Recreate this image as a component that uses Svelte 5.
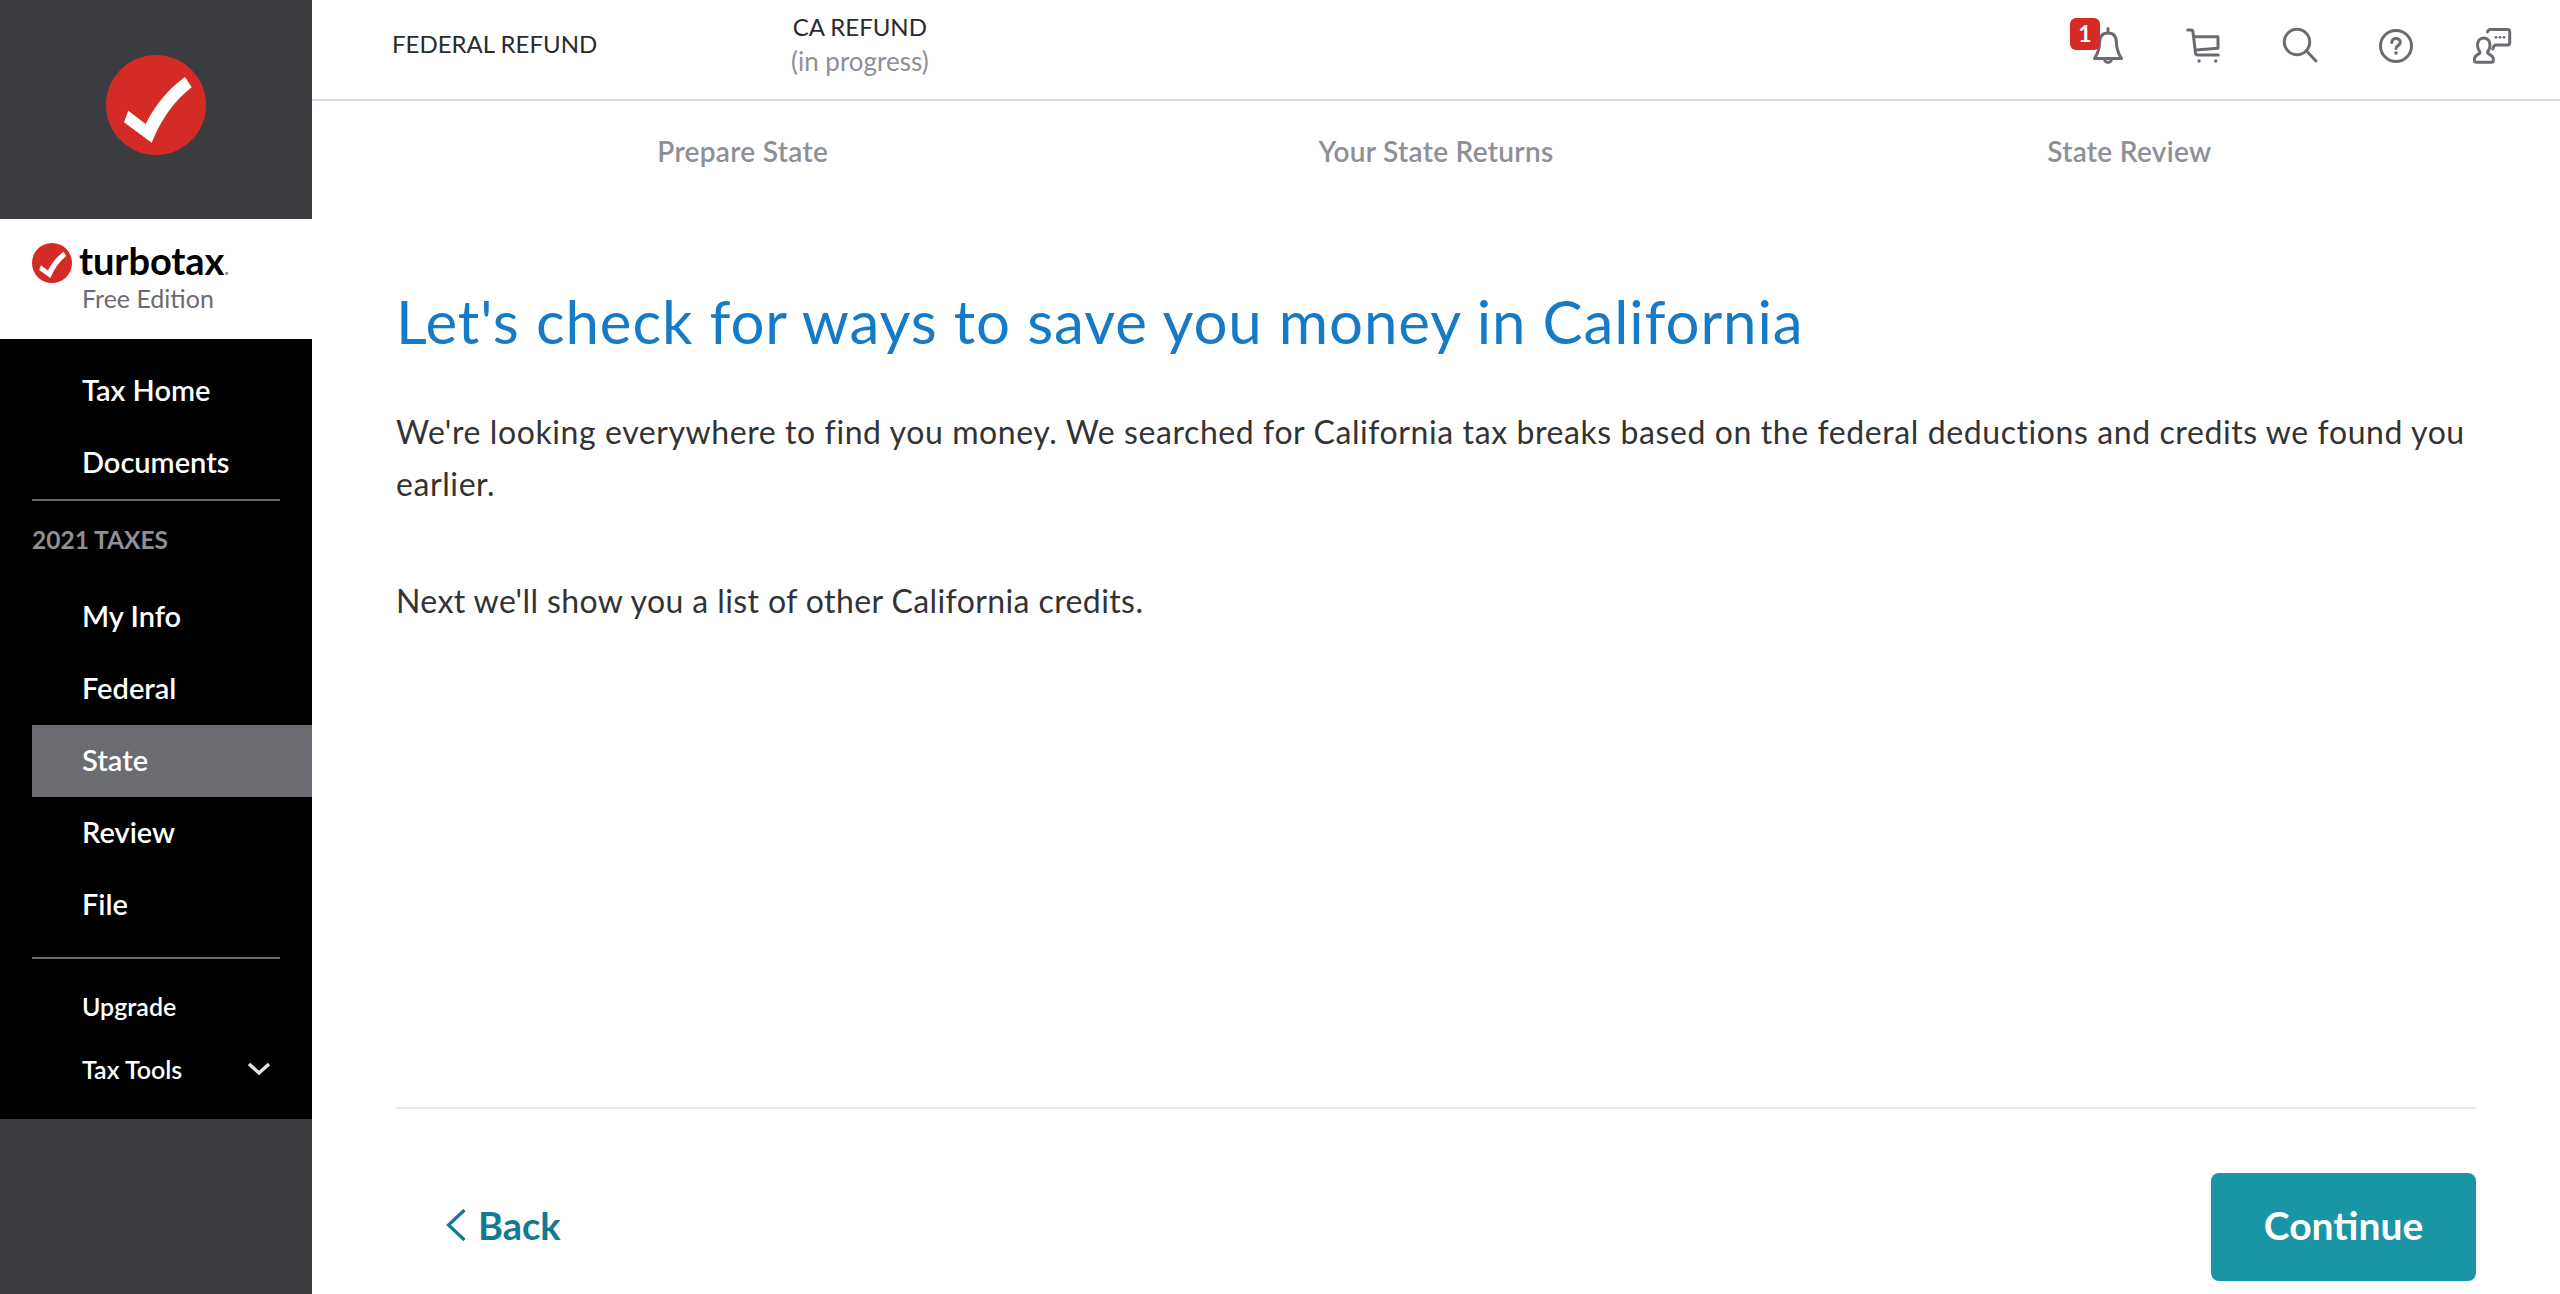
<script>
  const topItems = ['Tax Home', 'Documents'];
  const taxItems = ['My Info', 'Federal', 'State', 'Review', 'File'];
  const steps = ['Prepare State', 'Your State Returns', 'State Review'];
</script>

<div class="page">
  <aside class="sidebar">
    <div class="mark">
      <svg width="100" height="100" viewBox="0 0 100 100">
        <circle cx="50" cy="50" r="50" fill="#d52b27" />
        <path d="M79 22 L85.7 32.3 Q60 52 45.7 87.7 L18 67.3 L22.3 55.7 L39.7 69 Q54 40 79 22 Z" fill="#fff" />
      </svg>
    </div>
    <div class="brand">
      <div class="brand-row">
        <svg width="40" height="40" viewBox="0 0 100 100">
          <circle cx="50" cy="50" r="50" fill="#d52b27" />
          <path d="M79 22 L85.7 32.3 Q60 52 45.7 87.7 L18 67.3 L22.3 55.7 L39.7 69 Q54 40 79 22 Z" fill="#fff" />
        </svg>
        <span class="wordmark">turbotax<i>.</i></span>
      </div>
      <div class="edition">Free Edition</div>
    </div>
    <nav class="nav">
      {#each topItems as item}
        <div class="nav-item">{item}</div>
      {/each}
      <div class="nav-rule"></div>
      <div class="nav-label">2021 TAXES</div>
      {#each taxItems as item}
        <div class="nav-item" class:active={item === 'State'}>{item}</div>
      {/each}
      <div class="nav-rule second"></div>
      <div class="nav-small">Upgrade</div>
      <div class="nav-small">
        Tax Tools
        <svg class="chev" width="24" height="14" viewBox="0 0 24 14">
          <path d="M2 2 L12 11 L22 2" fill="none" stroke="#e4e4e4" stroke-width="3.4" />
        </svg>
      </div>
    </nav>
  </aside>

  <main class="main">
    <header class="topbar">
      <div class="refund">FEDERAL REFUND</div>
      <div class="refund state">
        <span>CA REFUND</span>
        <span class="progress">(in progress)</span>
      </div>
      <div class="icons">
        <div class="icon">
          <span class="badge">1</span>
          <svg width="40" height="40" viewBox="0 0 40 40">
            <path d="M20 2.5 V7 M20 7 C13.5 7 11.5 11 11.5 17 C11.5 25 9 28 6.5 32.5 H33.5 C31 28 28.5 25 28.5 17 C28.5 11 26.5 7 20 7 Z M16.5 33 A3.5 3.5 0 0 0 23.5 33" />
          </svg>
        </div>
        <div class="icon">
          <svg width="40" height="40" viewBox="0 0 40 40">
            <path d="M3.7 4 H7 C8.3 4 8.8 4.8 9 6 L11.5 27 C11.7 28.5 12.5 29 14 29 H34.3 M10 10.7 H34 V22.3 L12 24" />
            <circle class="dot" cx="15" cy="35" r="1.7" />
            <circle class="dot" cx="31.7" cy="35" r="1.7" />
          </svg>
        </div>
        <div class="icon">
          <svg width="40" height="40" viewBox="0 0 40 40">
            <circle cx="17" cy="16" r="12.7" />
            <path d="M26.5 25 L36 35" />
          </svg>
        </div>
        <div class="icon">
          <svg width="40" height="40" viewBox="0 0 40 40">
            <circle cx="20" cy="20" r="15.5" />
            <path d="M15.8 16.5 C15.8 11 24.3 11 24.3 16.5 C24.3 19.5 20 19.5 20 22.5" />
            <circle class="dot" cx="20" cy="27" r="1.8" />
          </svg>
        </div>
        <div class="icon">
          <svg width="40" height="40" viewBox="0 0 40 40">
            <path d="M15.5 6 C16 4 17 3.5 18.5 3.5 H35.5 C37 3.5 37.7 4.3 37.7 6 V16.5 C37.7 18.2 37 19 35.5 19 H24 C22.5 19 21.5 20.5 20.7 23" />
            <path d="M11.7 12 C7.5 12 5.5 15.5 5.5 19.5 C5.5 23.5 8 25 8 26.5 C8 28.5 2.5 28.5 2.5 33 V34.5 C2.5 35.7 3.2 36.3 4.5 36.3 H19.5 C20.7 36.3 21.3 35.7 21.3 34.5 V33 C21.3 28.5 15.5 28.5 15.5 26.5 C15.5 25 18 23.5 18 19.5 C18 15.5 16 12 11.7 12 Z" />
            <circle class="dot" cx="24" cy="11.3" r="1.4" />
            <circle class="dot" cx="28" cy="11.3" r="1.4" />
            <circle class="dot" cx="32" cy="11.3" r="1.4" />
          </svg>
        </div>
      </div>
    </header>

    <div class="content">
      <div class="steps">
        {#each steps as step}
          <div class="step">{step}</div>
        {/each}
      </div>
      <h1>Let's check for ways to save you money in California</h1>
      <p>We're looking everywhere to find you money. We searched for California tax breaks based on the federal deductions and credits we found you earlier.</p>
      <p>Next we'll show you a list of other California credits.</p>

      <footer class="footer">
        <div class="back">
          <svg width="22" height="34" viewBox="0 0 22 34">
            <path d="M19.5 2 L3.5 17 L19.5 32" fill="none" stroke="#127b90" stroke-width="3.2" />
          </svg>
          Back
        </div>
        <div class="continue">Continue</div>
      </footer>
    </div>
  </main>
</div>

<style>
  :global(body) {
    margin: 0;
    font-family: Lato, "Open Sans", sans-serif;
    background: #fff;
  }
  .page {
    display: flex;
    height: 1294px;
    overflow: hidden;
  }
  .sidebar {
    width: 312px;
    flex: none;
    background: #3b3c40;
  }
  .mark {
    height: 219px;
    display: flex;
    justify-content: center;
    padding-top: 55px;
    box-sizing: border-box;
  }
  .brand {
    height: 120px;
    background: #fff;
    padding: 24px 0 0 32px;
    box-sizing: border-box;
  }
  .brand-row {
    display: flex;
    align-items: center;
    gap: 7px;
    height: 40px;
  }
  .wordmark {
    font-size: 38px;
    font-weight: 700;
    color: #000;
    letter-spacing: -0.1px;
    line-height: 40px;
  }
  .wordmark i {
    font-style: normal;
    font-size: 20px;
    color: #8d9096;
  }
  .edition {
    font-size: 25px;
    line-height: 28px;
    color: #6b6c72;
    padding: 1px 0 0 50px;
  }
  .nav {
    background: #000;
    height: 780px;
    padding-top: 16px;
    box-sizing: border-box;
    color: #fff;
  }
  .nav-item {
    height: 72px;
    line-height: 70px;
    margin-left: 32px;
    padding-left: 50px;
    font-size: 29px;
    font-weight: 600;
  }
  .nav-item.active {
    background: #6b6c72;
  }
  .nav-rule {
    height: 2px;
    background: #6b6c72;
    margin: 0 32px;
  }
  .nav-rule.second {
    margin-top: 16px;
    margin-bottom: 16px;
  }
  .nav-label {
    height: 80px;
    line-height: 78px;
    margin-left: 32px;
    font-size: 24.5px;
    font-weight: 700;
    color: #8d9096;
  }
  .nav-small {
    position: relative;
    height: 63px;
    line-height: 62px;
    padding-left: 82px;
    font-size: 25px;
    font-weight: 600;
  }
  .chev {
    position: absolute;
    left: 247px;
    top: 24px;
  }
  .main {
    flex: 1;
    display: flex;
    flex-direction: column;
    min-width: 0;
  }
  .topbar {
    height: 101px;
    flex: none;
    box-sizing: border-box;
    border-bottom: 2px solid #d4d7db;
    display: flex;
    align-items: center;
    padding: 0 48px 0 80px;
    font-size: 24px;
    color: #2b2b2b;
  }
  .refund {
    width: 204px;
    margin-right: 195px;
    white-space: nowrap;
    margin-top: -12px;
  }
  .refund.state {
    width: auto;
    margin: -12px 0 0;
    display: flex;
    flex-direction: column;
    align-items: center;
    line-height: 35px;
  }
  .progress {
    font-size: 26px;
    color: #8d9096;
  }
  .icons {
    margin-left: auto;
    display: flex;
    gap: 56px;
    margin-top: -8px;
  }
  .icon {
    position: relative;
    width: 40px;
    height: 40px;
  }
  .icon svg {
    display: block;
  }
  .icon path,
  .icon circle {
    fill: none;
    stroke: #6b6c72;
    stroke-width: 3;
    stroke-linecap: round;
    stroke-linejoin: round;
  }
  .icon circle.dot {
    fill: #6b6c72;
    stroke: none;
  }
  .badge {
    position: absolute;
    left: -18px;
    top: -8px;
    width: 30px;
    height: 32px;
    border-radius: 6px;
    background: #d52b27;
    color: #fff;
    font-size: 23px;
    line-height: 30px;
    font-weight: 700;
    text-align: center;
  }
  .content {
    flex: 1;
    display: flex;
    flex-direction: column;
    padding: 0 84px;
  }
  .steps {
    display: grid;
    grid-template-columns: repeat(3, 1fr);
    height: 100px;
    line-height: 100px;
  }
  .step {
    text-align: center;
    font-size: 28px;
    font-weight: 600;
    letter-spacing: 0.3px;
    color: #8d9096;
  }
  h1 {
    margin: 0;
    padding-top: 74px;
    font-size: 60px;
    line-height: 92px;
    font-weight: 400;
    letter-spacing: 0.88px;
    color: #167bc6;
  }
  p {
    margin: 0;
    padding-top: 39px;
    font-size: 32px;
    line-height: 52px;
    letter-spacing: 0.59px;
    color: #333;
  }
  p + p {
    padding-top: 65px;
    letter-spacing: 0.4px;
  }
  .footer {
    margin-top: auto;
    height: 187px;
    box-sizing: border-box;
    border-top: 2px solid #e8e8e8;
    padding-top: 64px;
    display: flex;
    justify-content: space-between;
    align-items: flex-start;
  }
  .back {
    display: flex;
    align-items: center;
    gap: 11px;
    height: 104px;
    padding-left: 49px;
    font-size: 38px;
    font-weight: 700;
    color: #127b90;
  }
  .continue {
    width: 265px;
    height: 108px;
    border-radius: 8px;
    background: #1a95a5;
    color: #fff;
    font-size: 39px;
    font-weight: 700;
    line-height: 104px;
    text-align: center;
  }
</style>
